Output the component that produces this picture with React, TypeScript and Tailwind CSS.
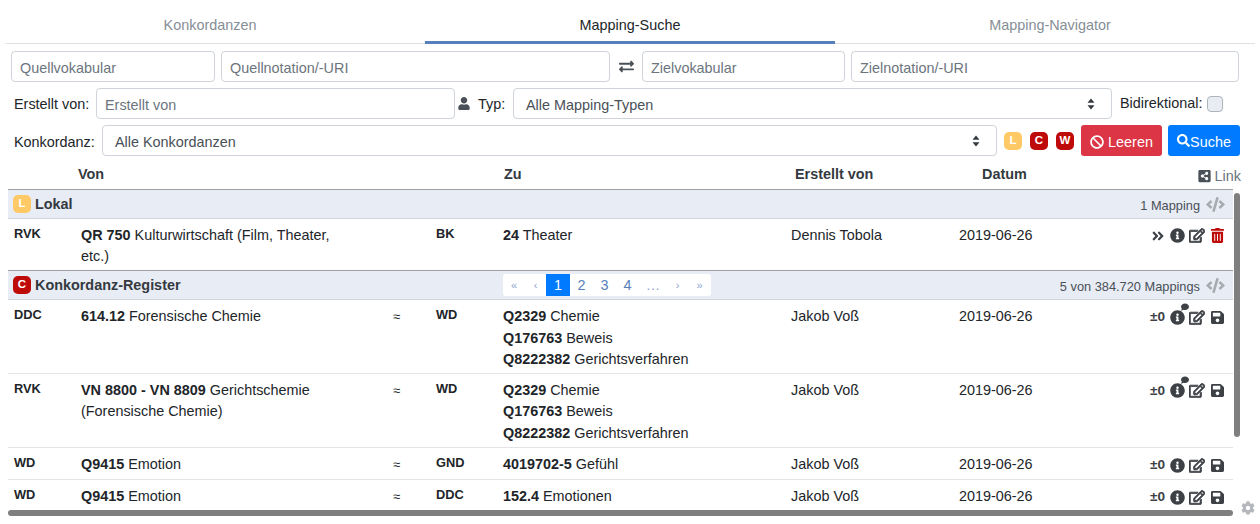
import React from "react";
import { FaAngleDoubleRight, FaBan, FaCode, FaCog, FaComment, FaExchangeAlt, FaInfoCircle, FaRegEdit, FaSave, FaSearch, FaShareAltSquare, FaTrashAlt, FaUser } from "react-icons/fa";

const input = "h-[31px] border border-[#ced4da] rounded-[4px] bg-white px-2 pt-[2px] text-[14.4px] text-[#495057] placeholder:text-[#6c757d] outline-none min-w-0";

function Chevrons() {
  return (
    <svg width="8" height="12" viewBox="0 0 8 12" className="shrink-0 text-[#343a40]" fill="currentColor">
      <path d="M4 0.5 7.5 4.7H0.5Z" />
      <path d="M4 11.5 7.5 7.3H0.5Z" />
    </svg>
  );
}

function Select({ label, className, pad }: { label: string; className: string; pad: string }) {
  return (
    <div className={`h-[31px] border border-[#ced4da] rounded-[4px] bg-white ${pad} pr-4 text-[14.4px] text-[#495057] flex items-center justify-between ${className}`}>
      <span className="pt-[4px]">{label}</span>
      <Chevrons />
    </div>
  );
}

function Badge({ t, c }: { t: string; c: string }) {
  return <span className={`w-[18px] h-[18px] text-[11.5px] ${c} rounded-[5px] inline-flex items-center justify-center font-bold text-white shrink-0`}>{t}</span>;
}

function Tab({ t, active }: { t: string; active?: boolean }) {
  return (
    <div className={`flex-1 mx-[5px] h-[44px] pt-[17px] text-center text-[14.4px] leading-4 ${active ? "border-b-[3px] border-[#577fbb] text-[#212529]" : "text-[#868e96]"}`}>{t}</div>
  );
}

function GroupRow({ badge, badgeColor, title, count, pages }: { badge: string; badgeColor: string; title: string; count: string; pages?: boolean }) {
  return (
    <div className="flex items-center h-[30px] bg-[#e8ecf5] border-t border-t-[#a0a0a0] border-b border-b-[#d0d4dc] pl-[5px] pr-[8px] relative">
      <Badge t={badge} c={badgeColor} />
      <span className="ml-1 pt-[2px] text-[14.4px] font-bold text-[#343a40]">{title}</span>
      {pages && (
        <div className="absolute left-[495px] top-[3px] h-[22px] w-[208px] bg-white rounded-[3px] flex items-center text-[14.4px] text-[#577fbb] leading-none">
          <span className="w-[22px] text-center text-[11px] text-[#8ea6cc]">«</span>
          <span className="w-[21px] text-center text-[11px] text-[#8ea6cc]">‹</span>
          <span className="w-[24px] h-full bg-[#007bff] text-white flex items-center justify-center">1</span>
          <span className="w-[23px] text-center">2</span>
          <span className="w-[23px] text-center">3</span>
          <span className="w-[23px] text-center">4</span>
          <span className="w-[28px] text-center text-[#8ea6cc]">…</span>
          <span className="w-[21px] text-center text-[11px] text-[#8ea6cc]">›</span>
          <span className="w-[23px] text-center text-[11px] text-[#8ea6cc]">»</span>
        </div>
      )}
      <span className="ml-auto mt-[4px] text-[12.8px] text-[#495057]">{count}</span>
      <FaCode className="ml-[6px] mt-[1px] text-[#a6abb0] w-[19px] h-[15px]" />
    </div>
  );
}

function Row({ from, fromText, to, second, creator = "Jakob Voß", actions, approx = true, h }: { from: string; fromText: React.ReactNode; to: string; second: React.ReactNode; creator?: string; actions: React.ReactNode; approx?: boolean; h: string }) {
  return (
    <div className={`flex ${h} text-[14.4px] leading-[21.5px] text-[#212529]`}>
      <div className="w-[73px] pl-[6px] font-bold text-[12.8px] leading-[17px] shrink-0">{from}</div>
      <div className="w-[312px] shrink-0 pr-[50px]">{fromText}</div>
      <div className="w-[43px] text-[12.8px] shrink-0 leading-[21px]">{approx ? "≈" : ""}</div>
      <div className="w-[67px] font-bold text-[12.8px] leading-[17px] shrink-0">{to}</div>
      <div className="w-[288px] shrink-0">{second}</div>
      <div className="w-[168px] shrink-0">{creator}</div>
      <div className="w-[120px] shrink-0">2019-06-26</div>
      <div className="flex-1 flex justify-end pr-[9px]">{actions}</div>
    </div>
  );
}

function Actions({ comment, first, trash }: { comment?: boolean; first: React.ReactNode; trash?: boolean }) {
  return (
    <div className="flex items-center h-[20px] mt-[1px] text-[#3d4045]">
      {first}
      <span className="relative ml-[5px]">
        <FaInfoCircle className="w-[15px] h-[15px]" />
        {comment && <FaComment className="absolute w-[8px] h-[8px] left-[11px] top-[-7px]" />}
      </span>
      <FaRegEdit className="ml-[4px] w-[16px] h-[15px] [stroke-width:28]" />
      {trash ? <FaTrashAlt className="ml-[6px] w-[13px] h-[15px] text-[#bf0a0a]" /> : <FaSave className="ml-[6px] w-[13px] h-[15px]" />}
    </div>
  );
}

const Score = () => <span className="text-[13.6px] font-bold text-[#3d4045]">±0</span>;
const B = ({ c }: { c: string }) => <b className="font-bold">{c}</b>;

const wd = (
  <>
    <div><B c="Q2329" /> Chemie</div>
    <div><B c="Q176763" /> Beweis</div>
    <div><B c="Q8222382" /> Gerichtsverfahren</div>
  </>
);

const line = "border-b border-[#e2e4e8]";

export default function App() {
  return (
    <div className="w-[1260px] h-[524px] overflow-hidden relative bg-white text-[14.4px] text-[#212529] font-['Liberation_Sans',Arial,sans-serif]">
      <div className="flex">
        <Tab t="Konkordanzen" />
        <Tab t="Mapping-Suche" active />
        <Tab t="Mapping-Navigator" />
      </div>
      <div className="h-px bg-[#dee2e6] mx-[5px] -mt-px" />

      <div className="flex items-center pl-[11px] mt-[7px] w-[1239px]">
        <input placeholder="Quellvokabular" className={`${input} w-[204px]`} />
        <input placeholder="Quellnotation/-URI" className={`${input} ml-[6px] w-[389px]`} />
        <div className="w-[32px] flex justify-center"><FaExchangeAlt className="w-[17px] h-[15px] text-[#495057]" /></div>
        <input placeholder="Zielvokabular" className={`${input} w-[203px]`} />
        <input placeholder="Zielnotation/-URI" className={`${input} ml-[6px] flex-1`} />
      </div>

      <div className="flex items-center pl-[14px] mt-[6px]">
        <span className="w-[82px] pt-[2px]">Erstellt von:</span>
        <input placeholder="Erstellt von" className={`${input} w-[359px]`} />
        <FaUser className="ml-[3px] w-[12px] h-[13px] text-[#495057]" />
        <span className="ml-[8px] w-[35px] pt-[2px]">Typ:</span>
        <Select label="Alle Mapping-Typen" pad="pl-3" className="w-[599px]" />
        <span className="ml-2">Bidirektional:</span>
        <span className="ml-[5px] w-[16px] h-[16px] rounded-[4px] border border-[#adb5bd] bg-[#e9ecf3]" />
      </div>

      <div className="flex items-center pl-[14px] mt-[6px]">
        <span className="w-[88px] pt-[4px]">Konkordanz:</span>
        <Select label="Alle Konkordanzen" pad="pl-3" className="w-[895px]" />
        <Badge t="L" c="bg-[#ffc966] ml-[7px]" />
        <Badge t="C" c="bg-[#bf0a0a] ml-[8px]" />
        <Badge t="W" c="bg-[#bf0a0a] ml-[8px]" />
        <button className="ml-[7px] w-[81px] h-[31px] rounded-[3px] bg-[#dc3545] text-white flex items-center justify-center gap-[4px]"><FaBan className="w-[14px] h-[14px] mt-[2px]" /><span className="pt-[4px]">Leeren</span></button>
        <button className="ml-[6px] w-[72px] h-[31px] rounded-[3px] bg-[#007bff] text-white flex items-center justify-center"><FaSearch className="w-[13px] h-[13px]" /><span className="pt-[4px]">Suche</span></button>
      </div>

      <div className="flex items-center h-[33px] pt-[5px] pl-[78px] font-bold text-[14.4px] text-[#343a40] w-[1241px]">
        <span className="w-[426px]">Von</span>
        <span className="w-[291px]">Zu</span>
        <span className="w-[187px]">Erstellt von</span>
        <span>Datum</span>
        <span className="ml-auto mt-[3px] flex items-center font-normal text-[#6c757d]"><FaShareAltSquare className="w-[13px] h-[14px] text-[#495057] mr-[4px]" />Link</span>
      </div>

      <div className="ml-[8px] w-[1225px] h-[321px] overflow-hidden">
        <GroupRow badge="L" badgeColor="bg-[#ffc966]" title="Lokal" count="1 Mapping" />
        <Row
          h="h-[51px] pt-[5.5px]"
          from="RVK"
          fromText={<><B c="QR 750" /> Kulturwirtschaft (Film, Theater, etc.)</>}
          to="BK"
          second={<><B c="24" /> Theater</>}
          creator="Dennis Tobola"
          approx={false}
          actions={<Actions first={<FaAngleDoubleRight className="w-[14px] h-[14px]" />} trash />}
        />
        <GroupRow badge="C" badgeColor="bg-[#bf0a0a]" title="Konkordanz-Register" count="5 von 384.720 Mappings" pages />
        <Row h={`h-[74px] pt-[6px] ${line}`} from="DDC" fromText={<><B c="614.12" /> Forensische Chemie</>} to="WD" second={wd} actions={<Actions comment first={<Score />} />} />
        <Row h={`h-[74px] pt-[5.5px] ${line}`} from="RVK" fromText={<><B c="VN 8800 - VN 8809" /> Gerichtschemie (Forensische Chemie)</>} to="WD" second={wd} actions={<Actions comment first={<Score />} />} />
        <Row h={`h-[32px] pt-[6px] ${line}`} from="WD" fromText={<><B c="Q9415" /> Emotion</>} to="GND" second={<><B c="4019702-5" /> Gefühl</>} actions={<Actions first={<Score />} />} />
        <Row h={`h-[32px] pt-[6px] ${line}`} from="WD" fromText={<><B c="Q9415" /> Emotion</>} to="DDC" second={<><B c="152.4" /> Emotionen</>} actions={<Actions first={<Score />} />} />
      </div>

      <div className="absolute left-[1234px] top-[193px] w-[6px] h-[244px] rounded-[3px] bg-[#7f7f7f]" />
      <div className="absolute left-[8px] top-[510px] w-[1225px] h-[6px] rounded-[3px] bg-[#7f7f7f]" />
      <FaCog className="absolute left-[1241px] top-[501px] w-[14px] h-[14px] text-[#b4b8bc]" />
    </div>
  );
}
